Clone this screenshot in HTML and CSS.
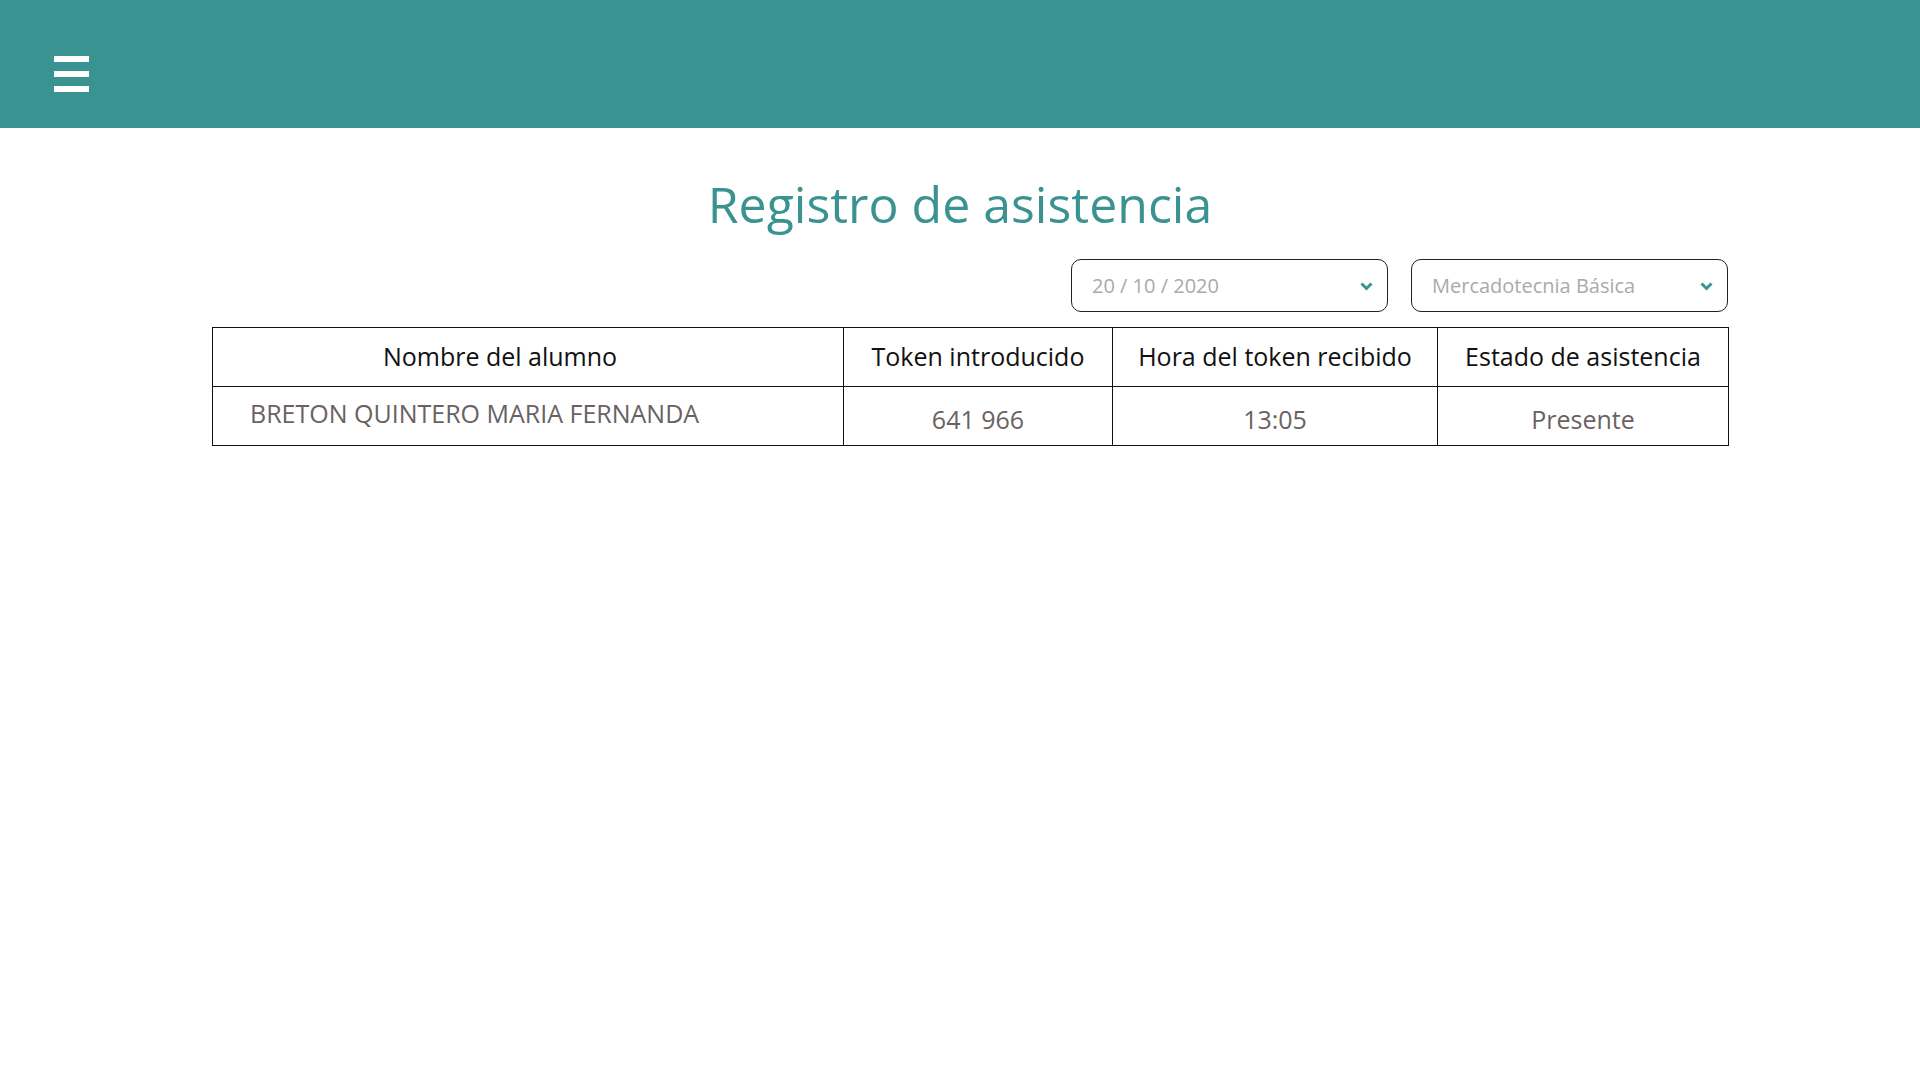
FILE: index.html
```html
<!DOCTYPE html>
<html lang="es">
<head>
<meta charset="utf-8">
<title>Registro de asistencia</title>
<link rel="stylesheet" href="styles.css">
</head>
<body>
<header class="topbar">
  <button class="menu-btn" aria-label="Menú">
    <span class="bar"></span>
    <span class="bar"></span>
    <span class="bar"></span>
  </button>
</header>
<main class="page">
  <h1 class="title">Registro de asistencia</h1>
  <div class="content">
    <div class="filters">
      <div class="select">
        <span class="select-text">20 / 10 / 2020</span>
        <svg class="chev" width="13" height="9" viewBox="0 0 13 9"><polyline points="1.5,1.5 6.5,6.5 11.5,1.5" fill="none" stroke="#3a9391" stroke-width="3"/></svg>
      </div>
      <div class="select">
        <span class="select-text">Mercadotecnia Básica</span>
        <svg class="chev" width="13" height="9" viewBox="0 0 13 9"><polyline points="1.5,1.5 6.5,6.5 11.5,1.5" fill="none" stroke="#3a9391" stroke-width="3"/></svg>
      </div>
    </div>
    <table class="grid">
      <colgroup>
        <col class="c1"><col class="c2"><col class="c3"><col class="c4">
      </colgroup>
      <thead>
        <tr>
          <th class="th-name">Nombre del alumno</th>
          <th>Token introducido</th>
          <th>Hora del token recibido</th>
          <th>Estado de asistencia</th>
        </tr>
      </thead>
      <tbody>
        <tr>
          <td class="td-name">BRETON QUINTERO MARIA FERNANDA</td>
          <td class="td-val">641 966</td>
          <td class="td-val">13:05</td>
          <td class="td-val">Presente</td>
        </tr>
      </tbody>
    </table>
  </div>
</main>
</body>
</html>
```

FILE: styles.css
```css
html, body {
  margin: 0;
  padding: 0;
  background: #ffffff;
  font-family: "Open Sans", "Noto Sans", sans-serif;
}

.topbar {
  height: 128px;
  background: #399391;
  display: flex;
  align-items: flex-start;
}

.menu-btn {
  margin: 56px 0 0 54px;
  padding: 0;
  border: 0;
  background: transparent;
  width: 35px;
  display: flex;
  flex-direction: column;
  gap: 9px;
  cursor: pointer;
}

.menu-btn .bar {
  display: block;
  width: 35px;
  height: 6px;
  background: #ffffff;
}

.page {
  padding-top: 42px;
}

.title {
  margin: 0;
  text-align: center;
  font-weight: 400;
  font-size: 50px;
  line-height: 68px;
  color: #3a9391;
}

.content {
  width: 1516px;
  margin-left: 212px;
  margin-top: 21px;
}

.filters {
  display: flex;
  justify-content: flex-end;
  gap: 23px;
  margin-bottom: 15px;
}

.select {
  box-sizing: border-box;
  width: 317px;
  height: 53px;
  border: 1px solid #222;
  border-radius: 10px;
  display: flex;
  align-items: center;
  justify-content: space-between;
  padding: 0 14px 0 20px;
}

.select-text {
  font-size: 20px;
  color: #aaaaaa;
}

.chev {
  display: block;
  margin-top: 1px;
}

.grid {
  width: 1516px;
  border-collapse: collapse;
  table-layout: fixed;
}

.c1 { width: 631px; }
.c2 { width: 269px; }
.c3 { width: 325px; }
.c4 { width: 291px; }

.grid tr {
  height: 59px;
}

.grid th,
.grid td {
  border: 1px solid #111;
  padding: 0;
  font-size: 25px;
  line-height: 34px;
}

.grid th {
  font-weight: 400;
  color: #111;
  text-align: center;
  padding-bottom: 3px;
}

.grid th.th-name {
  padding-right: 56px;
}

.grid td {
  color: #6a6262;
}

.grid td.td-name {
  text-align: left;
  padding-left: 37px;
  padding-bottom: 7px;
}

.grid td.td-val {
  text-align: center;
  padding-top: 6px;
}
```
